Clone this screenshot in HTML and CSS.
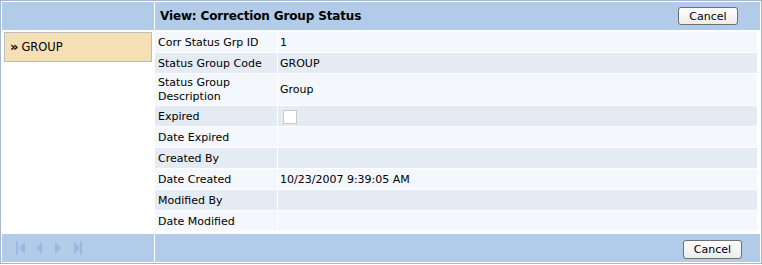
FILE: index.html
```html
<html>
  <head>
    <title>View: Correction Group Status</title>
    <link rel="stylesheet" href="styles.css">
  </head>
  <body>
    <div class="frame">
      <div class="bar side-head"></div>
      <div class="bar main-head">
        <span class="title">View: Correction Group Status</span>
        <button class="btn">Cancel</button>
      </div>
      <div class="side">
        <div class="item"><span class="quote">&raquo;</span> GROUP</div>
      </div>
      <div class="main">
        <div class="grid">
          <div class="lbl odd">Corr Status Grp ID</div><div class="val odd">1</div>
          <div class="lbl even">Status Group Code</div><div class="val even">GROUP</div>
          <div class="lbl odd tall">Status Group Description</div><div class="val odd tall">Group</div>
          <div class="lbl even">Expired</div><div class="val even"><span class="check"></span></div>
          <div class="lbl odd">Date Expired</div><div class="val odd"></div>
          <div class="lbl even">Created By</div><div class="val even"></div>
          <div class="lbl odd">Date Created</div><div class="val odd">10/23/2007 9:39:05 AM</div>
          <div class="lbl even">Modified By</div><div class="val even"></div>
          <div class="lbl odd">Date Modified</div><div class="val odd"></div>
        </div>
      </div>
      <div class="bar side-foot">
        <svg class="pager" width="80" height="16" viewBox="0 0 80 16">
          <g fill="#98b9e2">
            <rect x="2" y="1" width="2" height="14"/>
            <polygon points="11,2 11,14 5,8"/>
            <polygon points="28,2 28,14 22,8"/>
            <polygon points="41,2 41,14 47,8"/>
            <polygon points="60,2 60,14 66,8"/>
            <rect x="66" y="1" width="2" height="14"/>
          </g>
        </svg>
      </div>
      <div class="bar main-foot">
        <button class="btn">Cancel</button>
      </div>
    </div>
  </body>
</html>
```

FILE: styles.css
```css
body { margin: 0; background: #fff; font-family: "DejaVu Sans", Verdana, sans-serif; font-size: 11px; color: #000; }
.frame {
  width: 758px; height: 260px;
  border: 1px solid #a7b7cd; padding: 1px;
  display: grid; grid-template-columns: 152px 605px; grid-template-rows: 28px 1fr 28px;
  column-gap: 1px; row-gap: 2px;
}
.bar { background: #b1cbe8; display: flex; align-items: center; }
.main-head { padding: 0 22px 0 5px; justify-content: space-between; }
.title { font-size: 12px; font-weight: bold; letter-spacing: -0.15px; }
.main-foot { justify-content: flex-end; padding-right: 18px; }
.side-foot { padding-left: 12px; }
.pager { display: block; }
.btn {
  font-family: "DejaVu Sans", Verdana, sans-serif; font-size: 11px;
  width: 60px; height: 18px; padding: 0;
  border: 1px solid #707070; border-radius: 3px;
  background: linear-gradient(#ffffff, #ececec); color: #000;
}
.main-foot .btn { width: 59px; height: 19px; margin-top: 2px; }
.side { padding: 0 2px; }
.item {
  height: 28px; border: 1px solid #bdbdbd; background: #f5dfb5;
  display: flex; align-items: center; padding-left: 5px; font-size: 11.5px;
}
.quote { font-size: 13px; font-weight: bold; margin-right: 3px; position: relative; top: -1px; }
.main { padding-right: 3px; }
.grid { display: grid; grid-template-columns: 122px 1fr; gap: 1px; }
.lbl, .val { height: 20px; display: flex; align-items: center; }
.lbl { padding-left: 3px; }
.val { padding-left: 2px; }
.tall { height: 31px; line-height: 14px; }
.odd { background: #f4f7fb; }
.even { background: #e4ebf3; }
.check { width: 12px; height: 12px; border: 1px solid #c9c9c9; background: #fff; margin: 1px 0 0 3px; }
```
